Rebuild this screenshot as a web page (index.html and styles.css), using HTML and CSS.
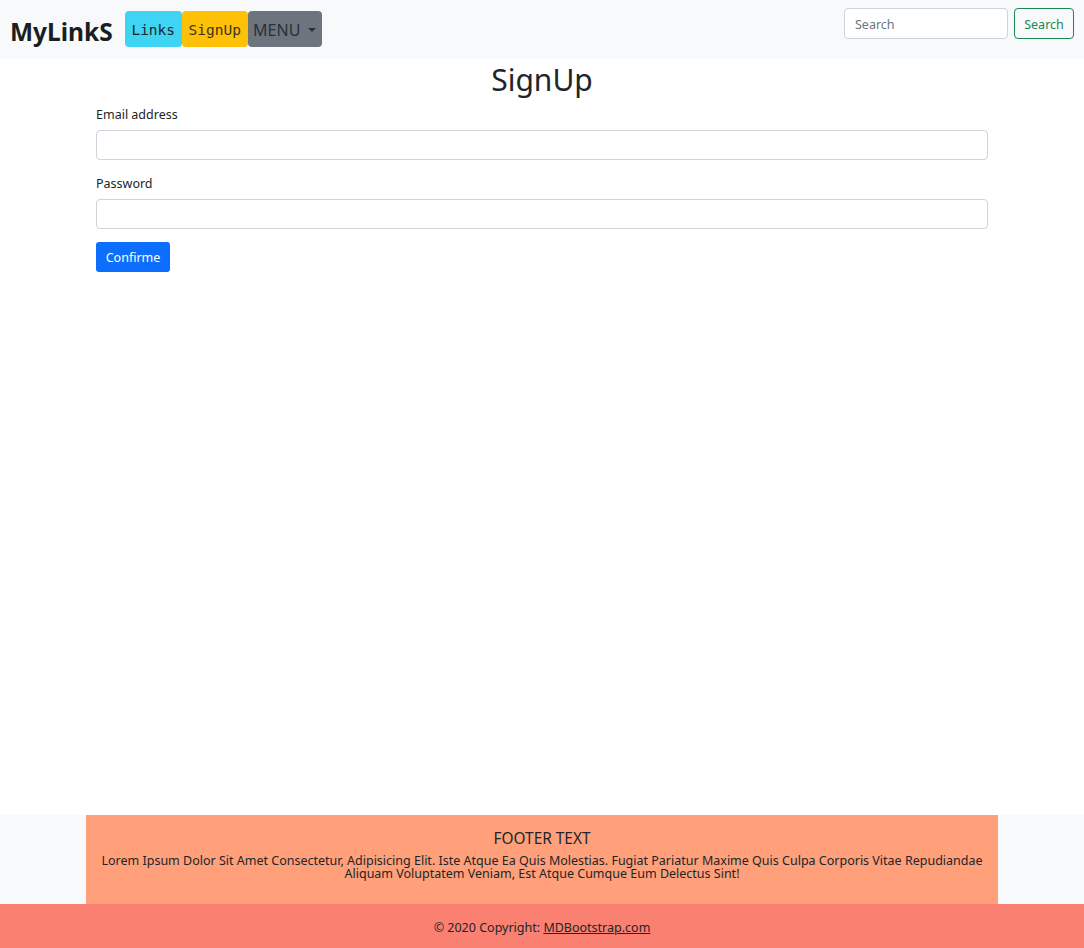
FILE: index.html
```html
<!DOCTYPE html>
<html lang="en">
<head>
<meta charset="utf-8">
<title>SignUp</title>
<link rel="stylesheet" href="styles.css">
</head>
<body>
<div class="page">
  <nav class="navbar">
    <div class="nav-left">
      <a class="brand" href="#">MyLinkS</a>
      <div class="nav-btns">
        <a class="nbtn nbtn-info" href="#">Links</a>
        <a class="nbtn nbtn-warn" href="#">SignUp</a>
        <a class="nbtn nbtn-menu" href="#">MENU <span class="caret"></span></a>
      </div>
    </div>
    <form class="search">
      <input class="search-input" type="search" placeholder="Search">
      <button class="search-btn" type="button">Search</button>
    </form>
  </nav>
  <main class="main">
    <h1 class="title">SignUp</h1>
    <form class="signup">
      <label class="label" for="email">Email address</label>
      <input class="field" id="email" type="email">
      <label class="label" for="pw">Password</label>
      <input class="field" id="pw" type="password">
      <button class="confirm" type="button">Confirme</button>
    </form>
  </main>
  <footer class="footer">
    <div class="footer-top">
      <div class="footer-box">
        <h5 class="footer-title">FOOTER TEXT</h5>
        <p class="footer-text">Lorem Ipsum Dolor Sit Amet Consectetur, Adipisicing Elit. Iste Atque Ea Quis Molestias. Fugiat Pariatur Maxime Quis Culpa Corporis Vitae Repudiandae Aliquam Voluptatem Veniam, Est Atque Cumque Eum Delectus Sint!</p>
      </div>
    </div>
    <div class="copyright">© 2020 Copyright: <a href="#">MDBootstrap.com</a></div>
  </footer>
</div>
</body>
</html>
```

FILE: styles.css
```css
* { box-sizing: border-box; }
html, body { margin: 0; padding: 0; }
body {
  font-family: "Noto Sans", "Open Sans", sans-serif;
  font-size: 12.5px;
  color: #212529;
  background: #fff;
}
.page {
  min-height: 948px;
  display: flex;
  flex-direction: column;
}
.navbar {
  background: #f8f9fa;
  height: 59px;
  display: flex;
  align-items: flex-start;
  justify-content: space-between;
  padding: 0 10px;
}
.nav-left {
  display: flex;
  align-items: flex-start;
  padding-top: 11px;
}
.brand {
  font-weight: 700;
  font-size: 24.5px;
  color: #1b1e21;
  text-decoration: none;
  margin-right: 12px;
  line-height: 36px;
  padding-top: 3px;
}
.nav-btns { display: flex; }
.nbtn {
  height: 36px;
  display: flex;
  align-items: center;
  justify-content: center;
  border-radius: 4px;
  text-decoration: none;
  color: #212529;
  padding-top: 1px;
}
.nbtn-info {
  background: #3dd5f3;
  width: 57px;
  font-family: "DejaVu Sans Mono", monospace;
  font-size: 14.5px;
}
.nbtn-warn {
  background: #ffc107;
  width: 66px;
  font-family: "DejaVu Sans Mono", monospace;
  font-size: 14.5px;
  color: #3b3520;
}
.nbtn-menu {
  background: #6c757d;
  width: 74px;
  font-size: 16px;
  color: #2b3035;
  gap: 4px;
}
.caret {
  display: inline-block;
  width: 0; height: 0;
  border-left: 4px solid transparent;
  border-right: 4px solid transparent;
  border-top: 4px solid #2b3035;
  margin-left: 4px;
}
.search {
  display: flex;
  gap: 6px;
  padding-top: 8px;
  margin-right: 0;
}
.search-input {
  width: 164px;
  height: 31px;
  border: 1px solid #ced4da;
  border-radius: 4px;
  padding: 5px 10px 3px;
  font-family: inherit;
  font-size: 12.5px;
  color: #212529;
}
.search-input::placeholder { color: #6c757d; }
.search-btn {
  height: 31px;
  width: 60px;
  border: 1px solid #198754;
  border-radius: 4px;
  background: transparent;
  color: #198754;
  font-family: inherit;
  font-size: 12.5px;
  padding: 2px 0 0;
}
.main {
  flex: 1;
  padding: 0 96px;
}
.title {
  text-align: center;
  font-weight: 400;
  font-size: 30px;
  line-height: 40px;
  margin: 1px 0 6px;
  color: #212529;
}
.signup { display: flex; flex-direction: column; align-items: flex-start; }
.label {
  line-height: 18px;
  margin-bottom: 6px;
}
.field {
  width: 100%;
  height: 30px;
  border: 1px solid #ced4da;
  border-radius: 4px;
  margin-bottom: 15px;
  font-family: inherit;
}
.confirm {
  background: #0d6efd;
  color: #fff;
  border: none;
  border-radius: 3px;
  height: 30px;
  width: 74px;
  font-family: inherit;
  font-size: 12.5px;
  padding: 1px 0 0;
  margin-top: -2px;
}
.footer-top {
  background: #f8f9fa;
  display: flex;
  justify-content: center;
}
.footer-box {
  width: 912px;
  background: #ffa07a;
  height: 89px;
  padding-top: 14px;
  text-align: center;
}
.footer-title {
  margin: 0 0 5px;
  font-weight: 400;
  font-size: 15.4px;
  line-height: 20px;
}
.footer-text {
  margin: 0;
  font-size: 12.5px;
  line-height: 13px;
  padding: 0 6px;
}
.copyright {
  background: #fa8072;
  height: 44px;
  line-height: 44px;
  text-align: center;
  padding-top: 2px;
}
.copyright a { color: #212529; }
```
